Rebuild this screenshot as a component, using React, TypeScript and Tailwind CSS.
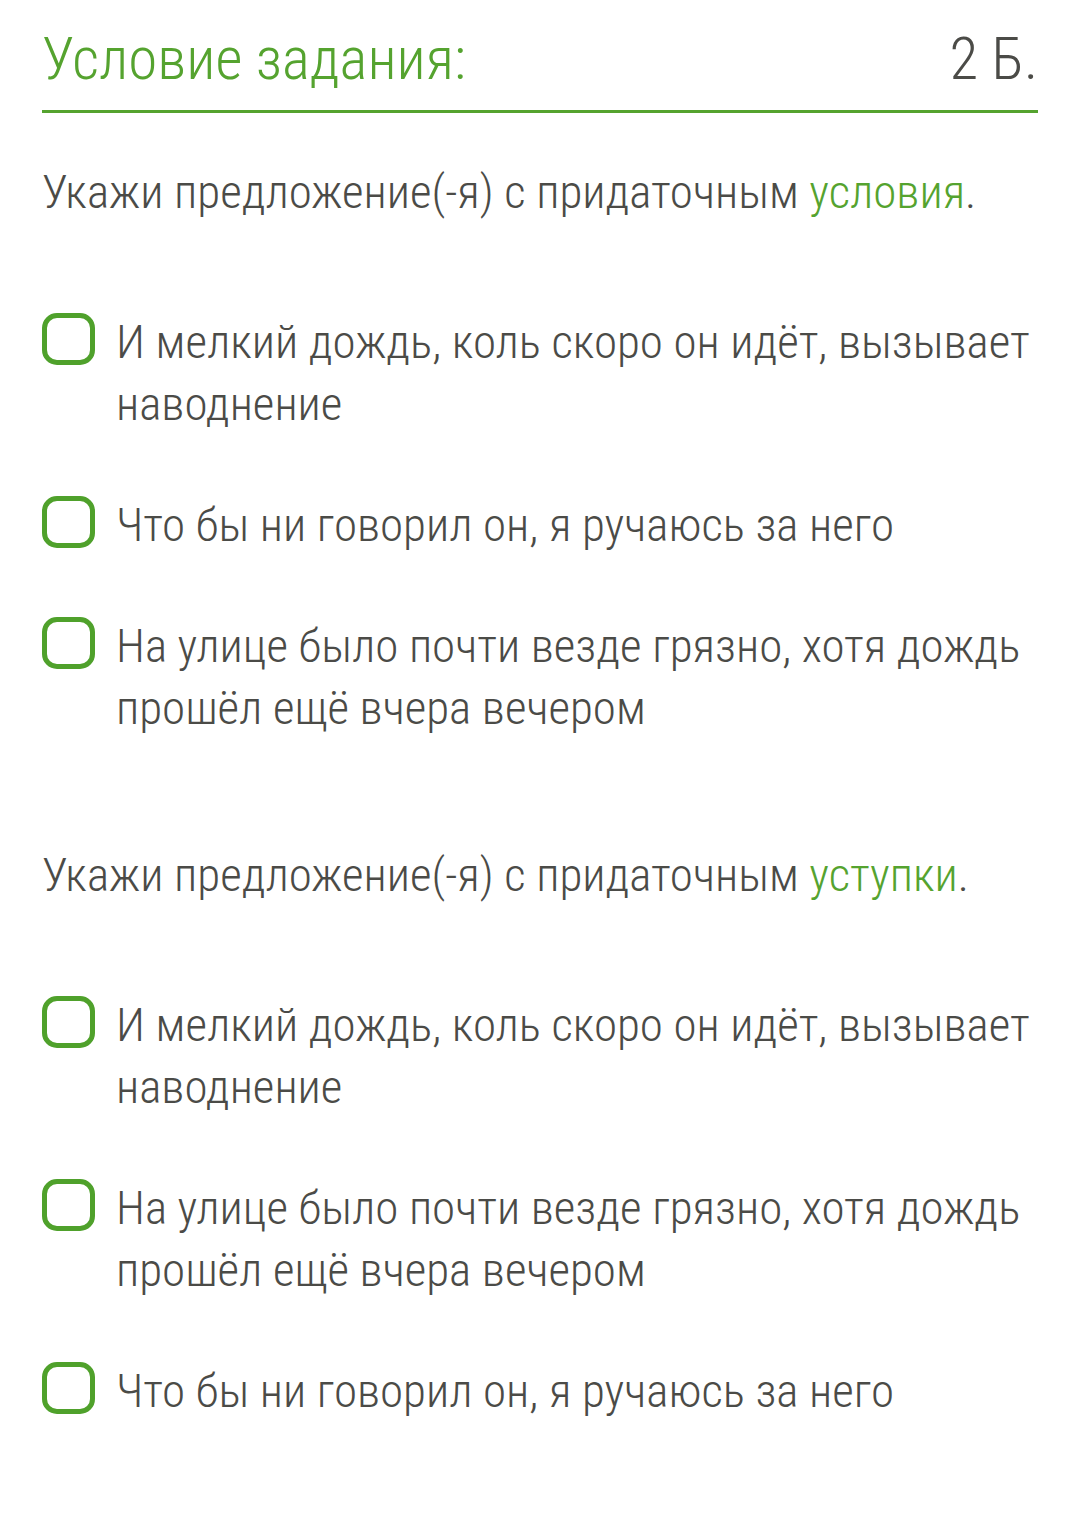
import React from "react";

const font = { fontFamily: "'Roboto Condensed', Roboto, 'Noto Sans', sans-serif" };

type Question = {
  lead: string;
  accent: string;
  options: string[];
};

const questions: Question[] = [
  {
    lead: "Укажи предложение(-я) с придаточным ",
    accent: "условия",
    options: [
      "И мелкий дождь, коль скоро он идёт, вызывает наводнение",
      "Что бы ни говорил он, я ручаюсь за него",
      "На улице было почти везде грязно, хотя дождь прошёл ещё вчера вечером",
    ],
  },
  {
    lead: "Укажи предложение(-я) с придаточным ",
    accent: "уступки",
    options: [
      "И мелкий дождь, коль скоро он идёт, вызывает наводнение",
      "На улице было почти везде грязно, хотя дождь прошёл ещё вчера вечером",
      "Что бы ни говорил он, я ручаюсь за него",
    ],
  },
];

function Checkbox() {
  return (
    <span className="mt-[2px] h-[52px] w-[53px] shrink-0 rounded-[15px] border-[5px] border-[#4fa12b] bg-white" />
  );
}

function Option({ text }: { text: string }) {
  return (
    <label className="flex items-start gap-[21px] cursor-pointer">
      <Checkbox />
      <span className="text-[47px] leading-[62px] font-[280] text-[#4b4b47] [font-stretch:condensed]">
        {text}
      </span>
    </label>
  );
}

export default function App() {
  return (
    <div className="min-h-screen bg-white px-[42px] pt-[22px]" style={font}>
      <header className="flex items-baseline justify-between border-b-[3px] border-[#55a32f] pb-[14px]">
        <h1 className="text-[59px] leading-[74px] font-[280] text-[#55a32f] [font-stretch:condensed]">
          Условие задания:
        </h1>
        <span className="text-[59px] leading-[74px] font-[280] text-[#4b4b47] [font-stretch:condensed]">
          2 Б.
        </span>
      </header>

      {questions.map((q, i) => (
        <section key={i} className={i === 0 ? "mt-[48px]" : "mt-[105px]"}>
          <p className="text-[47px] leading-[62px] font-[280] text-[#4b4b47] [font-stretch:condensed]">
            {q.lead}
            <span className="text-[#55a32f]">{q.accent}</span>.
          </p>
          <div className="mt-[88px] flex flex-col gap-[59px]">
            {q.options.map((o, j) => (
              <Option key={j} text={o} />
            ))}
          </div>
        </section>
      ))}
    </div>
  );
}
